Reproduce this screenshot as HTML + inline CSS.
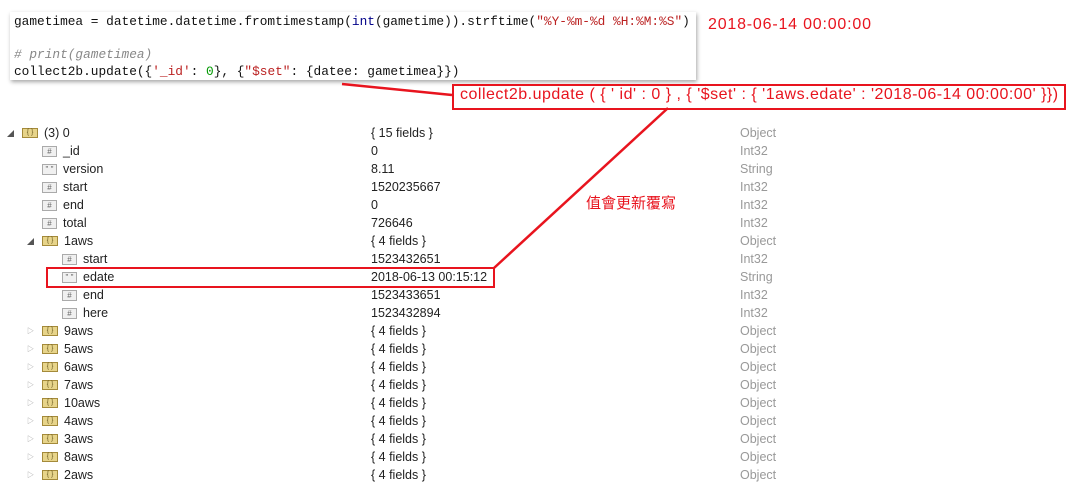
<!DOCTYPE html>
<html><head><meta charset="utf-8"><style>
body{margin:0;width:1072px;height:482px;background:#fff;position:relative;overflow:hidden;font-family:"Segoe UI","Liberation Sans","Noto Sans CJK TC",sans-serif;}
.code{position:absolute;left:10px;top:12px;width:686px;height:68px;background:#fff;box-shadow:1px 2px 4px rgba(0,0,0,.35);font-family:"Liberation Mono",monospace;font-size:12.8px;color:#111;}
.code div{position:absolute;left:4px;white-space:pre;}
.s{color:#b22;} .n{color:#090;} .c{color:#888;font-style:italic} .k{color:#008;}
.r{position:absolute;height:18px;line-height:18px;font-size:12.5px;color:#222;white-space:pre;}
.t{color:#999;}
.oi{position:absolute;width:14px;height:8px;background:#e7d48a;border:1px solid #a48a3a;font-size:7px;line-height:8px;text-align:center;color:#6a5a20;}
.fi{position:absolute;width:13px;height:9px;background:#f0f0f0;border:1px solid #aaa;font-size:8px;line-height:9px;text-align:center;color:#666;}
.ar{position:absolute;font-size:7px;color:#555;}
.red{color:#e8141e;}
</style></head><body>
<div class="code">
<div style="top:2px">gametimea = datetime.datetime.fromtimestamp(<span class="k">int</span>(gametime)).strftime(<span class="s">"%Y-%m-%d %H:%M:%S"</span>)</div>
<div style="top:35px" class="c"># print(gametimea)</div>
<div style="top:52px">collect2b.update({<span class="s">'_id'</span>: <span class="n">0</span>}, {<span class="s">"$set"</span>: {datee: gametimea}})</div>
</div>
<div class="red" style="position:absolute;left:708px;top:16px;font-size:16px;letter-spacing:0.8px;">2018-06-14 00:00:00</div>
<div style="position:absolute;left:452px;top:84px;width:610px;height:22px;border:2.5px solid #e8141e;"></div>
<div class="red" style="position:absolute;left:460px;top:86px;font-size:16px;letter-spacing:0.5px;white-space:pre;">collect2b.update ( { ' id' : 0 } , { '$set' : { '1aws.edate' : '2018-06-14 00:00:00' }})</div>
<div class="red" style="position:absolute;left:586px;top:192px;font-size:15px;">值會更新覆寫</div>
<div style="position:absolute;left:46px;top:267px;width:445px;height:17px;border:2.5px solid #e8141e;"></div>
<svg style="position:absolute;left:0;top:0" width="1072" height="482"><line x1="342" y1="84" x2="452" y2="95" stroke="#e8141e" stroke-width="2.5"/><line x1="668" y1="108" x2="494" y2="268" stroke="#e8141e" stroke-width="2.5"/></svg>
<div id="rows"></div>
<script>
var d=[[0,1,'obj','(3) 0','{ 15 fields }','Object'],[1,0,'n','_id','0','Int32'],[1,0,'s','version','8.11','String'],[1,0,'n','start','1520235667','Int32'],[1,0,'n','end','0','Int32'],[1,0,'n','total','726646','Int32'],[1,1,'obj','1aws','{ 4 fields }','Object'],[2,0,'n','start','1523432651','Int32'],[2,0,'s','edate','2018-06-13 00:15:12','String'],[2,0,'n','end','1523433651','Int32'],[2,0,'n','here','1523432894','Int32']];
['9aws','5aws','6aws','7aws','10aws','4aws','3aws','8aws','2aws'].forEach(function(n){d.push([1,2,'obj',n,'{ 4 fields }','Object'])});
var h='';d.forEach(function(r,i){var y=124+18*i,x=22+r[0]*20;
if(r[1]==1)h+='<div class="ar" style="left:'+(x-15)+'px;top:'+(y+5)+'px">&#9698;</div>';
if(r[1]==2)h+='<div class="ar" style="left:'+(x-15)+'px;top:'+(y+4)+'px;color:#999">&#9655;</div>';
if(r[2]=='obj')h+='<div class="oi" style="left:'+x+'px;top:'+(y+4)+'px">{ }</div>';
else h+='<div class="fi" style="left:'+x+'px;top:'+(y+4)+'px">'+(r[2]=='n'?'#':'" "')+'</div>';
h+='<div class="r" style="left:'+(x+(r[2]=='obj'?22:21))+'px;top:'+y+'px">'+r[3]+'</div>';
h+='<div class="r" style="left:371px;top:'+y+'px">'+r[4]+'</div>';
h+='<div class="r t" style="left:740px;top:'+y+'px">'+r[5]+'</div>';});
document.getElementById('rows').innerHTML=h;
</script>
</body></html>
